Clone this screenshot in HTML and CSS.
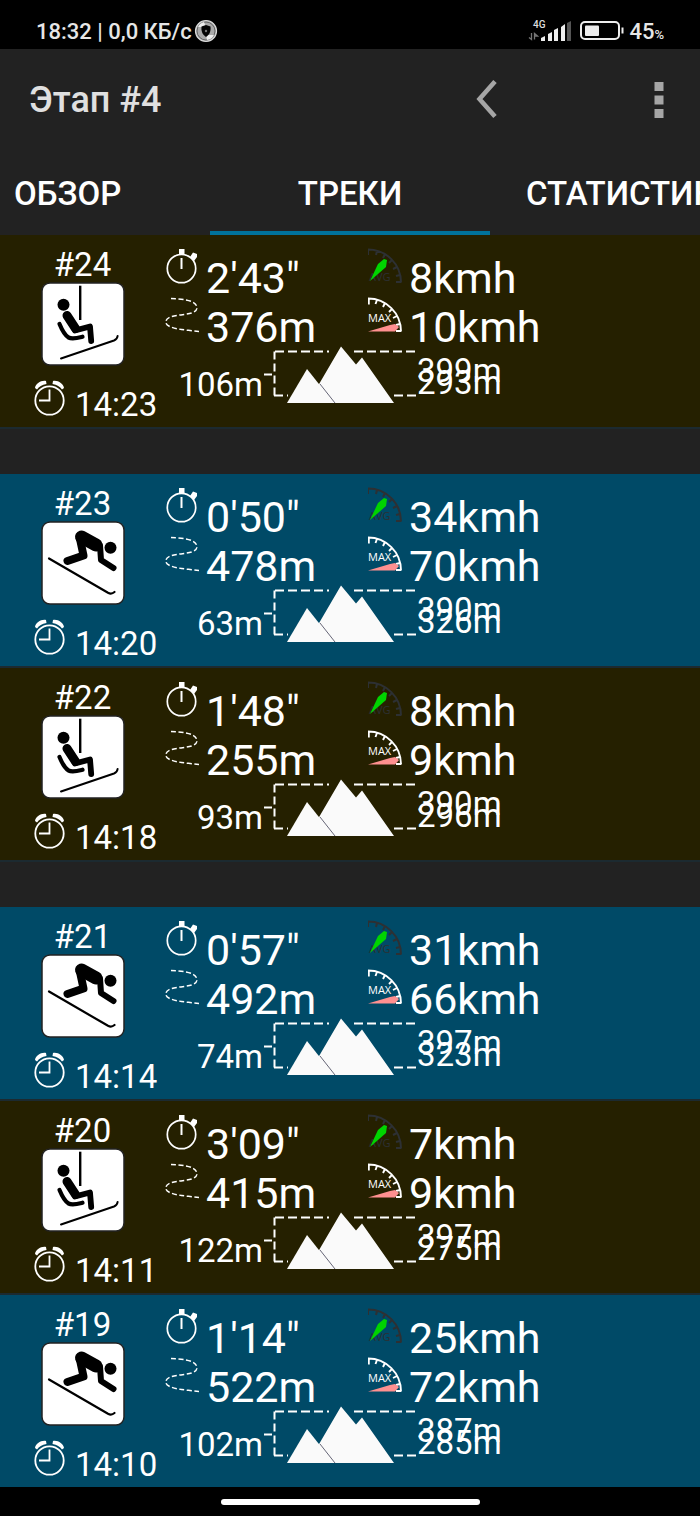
FILE: index.html
```html
<!DOCTYPE html>
<html lang="ru">
<head>
<meta charset="utf-8">
<meta name="viewport" content="width=device-width, initial-scale=1">
<title>Этап #4</title>
<link rel="stylesheet" href="styles.css">
</head>
<body>
<svg class="sprite" aria-hidden="true">
  <symbol id="lift" viewBox="0 0 84 84">
    <rect x="1" y="1" width="82" height="82" rx="8" fill="#fff" stroke="#222" stroke-width="1.5"/>
    <g fill="none" stroke="#000" stroke-linecap="round" stroke-linejoin="round">
      <path d="M39.200 3.700V38" stroke-width="2.400" stroke-linecap="butt"/>
      <path d="M26 33.500l8.500 13" stroke-width="9"/>
      <path d="M34 48.500l15-4 1.200 14.500" stroke-width="5.800"/>
      <path d="M18.500 42c2.500 6 5 11 9 13.500 4 2 9 .5 14-.8" stroke-width="4.200"/>
      <path d="M20 76.500l53-18c2.500-1 3.300-2 3.600-4.500" stroke-width="2"/>
    </g>
    <path d="M30 37l9 9-3 4-6-2z"/>
    <circle cx="22.500" cy="22.700" r="6"/>
  </symbol>
  <symbol id="skier" viewBox="0 0 84 84">
    <rect x="1" y="1" width="82" height="82" rx="8" fill="#fff" stroke="#222" stroke-width="1.500"/>
    <g fill="none" stroke="#000" stroke-linecap="round" stroke-linejoin="round">
      <path d="M40.500 16l14.500 8" stroke-width="13"/>
      <path d="M39 18l3.500 16.500L26.500 40" stroke-width="8"/>
      <path d="M59 24.500l1 14.500 12.500 8" stroke-width="6"/>
      <path d="M8 37.500l59 34.300c3 1.500 5 .5 6.500-.8" stroke-width="2.200"/>
    </g>
    <circle cx="69.500" cy="26.700" r="6"/>
  </symbol>
  <symbol id="alarm" viewBox="0 0 32 36">
    <g fill="none" stroke="currentColor">
      <circle cx="15.500" cy="20.500" r="14.200" stroke-width="1.800"/>
      <path d="M15.500 9.500v11H5" stroke-width="1.800"/>
    </g>
    <path d="M1 8C1.500 4 7 0 12 1l.5 3C8 5 5 6.500 3 9.500zM30 8C29.500 4 24 0 19 1l-.5 3c4.500 1 7.500 2.500 9.500 5.500z" fill="currentColor"/>
  </symbol>
  <symbol id="stopwatch" viewBox="0 0 34 36">
    <circle cx="16.500" cy="20.500" r="14.200" fill="none" stroke="currentColor" stroke-width="1.700"/>
    <path d="M16.500 10v11" stroke="currentColor" stroke-width="2"/>
    <path d="M14 1h5.500v6H14zM25 9l3-4.500 4 1.500v3l-3 4z" fill="currentColor"/>
  </symbol>
  <symbol id="distance" viewBox="0 0 34 36">
    <path d="M6 1.500c10 .5 25 1 26 9 0 6-10 6.500-17 7.500C8 19 1 20 .8 25c0 7 20 8 33.500 9.500" fill="none" stroke="currentColor" stroke-width="1.500" stroke-dasharray="5 2.500"/>
  </symbol>
  <symbol id="avg" viewBox="0 0 34 36">
    <path d="M0 1.500A33 33 0 0 1 33 34.500M0 2v5M9 3l-1 4M17 6l-2 4M24 12l-3 3M29 19l-4 2M33 34h-5M32 27l-4 1" fill="none" stroke="#2d3033" stroke-width="2"/>
    <text x="1" y="33" class="dial-text dial-text-dim">AVG</text>
    <path d="M2 33l8-17 6-5 3 1-1 7z" fill="#00d400"/>
  </symbol>
  <symbol id="max" viewBox="0 0 34 36">
    <path d="M0 1.500A33 33 0 0 1 33 34.500M.8 2v5.500M9 3L7.500 7M17 6l-2 4M24 12l-3 3M29 19l-4 2M33 34h-5M32 27l-4 1" fill="none" stroke="currentColor" stroke-width="1.900"/>
    <text x="0" y="25" class="dial-text">MAX</text>
    <path d="M0 34.500L22 28l5-1 4 3-4 4.500z" fill="#ff9090"/>
  </symbol>
  <symbol id="mountain" viewBox="0 0 154 58">
    <path d="M1 28.500h8M11.500 5.500v48" fill="none" stroke="currentColor" stroke-width="2" stroke-dasharray="8 4"/>
    <path d="M12 5.500h54M91 5.500h63" fill="none" stroke="currentColor" stroke-width="2" stroke-dasharray="9 4"/>
    <path d="M11 49.500h14M131 49.500h23" fill="none" stroke="currentColor" stroke-width="2" stroke-dasharray="9 4"/>
    <path d="M45 57l14-24L78 .5l15 18 6-7L131 57z" fill="#fafafa"/>
    <path d="M24 57l20-34 27 34z" fill="#fafafa"/>
    <path d="M57 38l15 19" stroke="#667" stroke-width="1"/>
  </symbol>
</svg>

<div class="screen">
  <div class="status-bar">
    <span>18:32 | 0,0 КБ/с</span>
    <svg class="disc" viewBox="0 0 24 24" aria-hidden="true">
      <circle cx="12" cy="12" r="10.500" fill="#aaa" stroke="#ddd" stroke-width="1.200"/>
      <circle cx="12" cy="12" r="9" fill="none" stroke="#666" stroke-width="1"/>
      <path d="M4 8a9 9 0 0 1 6-5l2 5zM20 16a9 9 0 0 1-7 5l-1-5z" fill="#eee"/>
      <path d="M7.500 7.500L12 6l4.500 1.500c.5 5-1 8-4.500 10.500C8.500 15.500 7 12.500 7.500 7.500z" fill="#050505"/>
      <circle cx="12" cy="12" r="1.200" fill="#777"/>
    </svg>
    <svg class="signal" viewBox="0 0 46 24" aria-label="4G">
      <text x="5" y="9" class="network">4G</text>
      <path d="M3.500 14v6.500l-2.500-2M6.500 20.500V14.500l3 2.500H6.500" fill="none" stroke="#777" stroke-width="1.300"/>
      <path d="M13 22v-3l4-2v5zM20 22v-7l4-2v9zM26 22V11l4-2v13zM33 22V8l4-3v17z" fill="#eee"/>
      <path d="M39 22V4l4-2v20z" fill="#555"/>
    </svg>
    <svg class="battery" viewBox="0 0 44 20" aria-hidden="true">
      <rect x="1" y="1" width="38" height="17" rx="4" fill="none" stroke="#eee" stroke-width="2"/>
      <rect x="5" y="4.500" width="14" height="10.500" rx="1" fill="#eee"/>
      <path d="M42.500 6.500v6" stroke="#eee" stroke-width="2"/>
    </svg>
    <span>45<small class="percent">%</small></span>
  </div>

  <header class="action-bar">
    <h1 class="title">Этап #4</h1>
    <button class="icon-button" type="button" aria-label="Назад">
      <svg width="22" height="40" viewBox="0 0 22 40"><path d="M19 1.500L3.500 19 19 36.500" fill="none" stroke="#a6a6a6" stroke-width="4.600"/></svg>
    </button>
    <button class="icon-button more" type="button" aria-label="Меню">
      <svg width="10" height="38" viewBox="0 0 10 38"><path d="M.5 1h9v9h-9zM.5 14.500h9v9h-9zM.5 28h9v9h-9z" fill="#a6a6a6"/></svg>
    </button>
  </header>

  <nav class="tabs">
    <button class="tab tab-first" type="button">ОБЗОР</button>
    <button class="tab tab-active" type="button" aria-current="page">ТРЕКИ</button>
    <button class="tab tab-last" type="button">СТАТИСТИКА</button>
  </nav>

  <ul class="tracks">
    <li class="track lift gap-after">
      <div class="summary">
        <span>#24</span>
        <svg class="kind"><use href="#lift"/></svg>
        <div class="start"><svg class="alarm"><use href="#alarm"/></svg><time>14:23</time></div>
      </div>
      <div class="details">
        <div class="metrics">
          <div class="metric"><svg class="icon"><use href="#stopwatch"/></svg><span>2'43"</span></div>
          <div class="metric"><svg class="icon"><use href="#avg"/></svg><span>8kmh</span></div>
          <div class="metric"><svg class="icon"><use href="#distance"/></svg><span>376m</span></div>
          <div class="metric"><svg class="icon"><use href="#max"/></svg><span>10kmh</span></div>
        </div>
        <div class="elevation">
          <span class="drop">106m</span><svg class="mountain"><use href="#mountain"/></svg>
          <div class="range"><span>399m</span><span>293m</span></div>
        </div>
      </div>
    </li>
    <li class="track run">
      <div class="summary">
        <span>#23</span>
        <svg class="kind"><use href="#skier"/></svg>
        <div class="start"><svg class="alarm"><use href="#alarm"/></svg><time>14:20</time></div>
      </div>
      <div class="details">
        <div class="metrics">
          <div class="metric"><svg class="icon"><use href="#stopwatch"/></svg><span>0'50"</span></div>
          <div class="metric"><svg class="icon"><use href="#avg"/></svg><span>34kmh</span></div>
          <div class="metric"><svg class="icon"><use href="#distance"/></svg><span>478m</span></div>
          <div class="metric"><svg class="icon"><use href="#max"/></svg><span>70kmh</span></div>
        </div>
        <div class="elevation">
          <span class="drop">63m</span><svg class="mountain"><use href="#mountain"/></svg>
          <div class="range"><span>390m</span><span>326m</span></div>
        </div>
      </div>
    </li>
    <li class="track lift gap-after">
      <div class="summary">
        <span>#22</span>
        <svg class="kind"><use href="#lift"/></svg>
        <div class="start"><svg class="alarm"><use href="#alarm"/></svg><time>14:18</time></div>
      </div>
      <div class="details">
        <div class="metrics">
          <div class="metric"><svg class="icon"><use href="#stopwatch"/></svg><span>1'48"</span></div>
          <div class="metric"><svg class="icon"><use href="#avg"/></svg><span>8kmh</span></div>
          <div class="metric"><svg class="icon"><use href="#distance"/></svg><span>255m</span></div>
          <div class="metric"><svg class="icon"><use href="#max"/></svg><span>9kmh</span></div>
        </div>
        <div class="elevation">
          <span class="drop">93m</span><svg class="mountain"><use href="#mountain"/></svg>
          <div class="range"><span>390m</span><span>296m</span></div>
        </div>
      </div>
    </li>
    <li class="track run">
      <div class="summary">
        <span>#21</span>
        <svg class="kind"><use href="#skier"/></svg>
        <div class="start"><svg class="alarm"><use href="#alarm"/></svg><time>14:14</time></div>
      </div>
      <div class="details">
        <div class="metrics">
          <div class="metric"><svg class="icon"><use href="#stopwatch"/></svg><span>0'57"</span></div>
          <div class="metric"><svg class="icon"><use href="#avg"/></svg><span>31kmh</span></div>
          <div class="metric"><svg class="icon"><use href="#distance"/></svg><span>492m</span></div>
          <div class="metric"><svg class="icon"><use href="#max"/></svg><span>66kmh</span></div>
        </div>
        <div class="elevation">
          <span class="drop">74m</span><svg class="mountain"><use href="#mountain"/></svg>
          <div class="range"><span>397m</span><span>323m</span></div>
        </div>
      </div>
    </li>
    <li class="track lift">
      <div class="summary">
        <span>#20</span>
        <svg class="kind"><use href="#lift"/></svg>
        <div class="start"><svg class="alarm"><use href="#alarm"/></svg><time>14:11</time></div>
      </div>
      <div class="details">
        <div class="metrics">
          <div class="metric"><svg class="icon"><use href="#stopwatch"/></svg><span>3'09"</span></div>
          <div class="metric"><svg class="icon"><use href="#avg"/></svg><span>7kmh</span></div>
          <div class="metric"><svg class="icon"><use href="#distance"/></svg><span>415m</span></div>
          <div class="metric"><svg class="icon"><use href="#max"/></svg><span>9kmh</span></div>
        </div>
        <div class="elevation">
          <span class="drop">122m</span><svg class="mountain"><use href="#mountain"/></svg>
          <div class="range"><span>397m</span><span>275m</span></div>
        </div>
      </div>
    </li>
    <li class="track run">
      <div class="summary">
        <span>#19</span>
        <svg class="kind"><use href="#skier"/></svg>
        <div class="start"><svg class="alarm"><use href="#alarm"/></svg><time>14:10</time></div>
      </div>
      <div class="details">
        <div class="metrics">
          <div class="metric"><svg class="icon"><use href="#stopwatch"/></svg><span>1'14"</span></div>
          <div class="metric"><svg class="icon"><use href="#avg"/></svg><span>25kmh</span></div>
          <div class="metric"><svg class="icon"><use href="#distance"/></svg><span>522m</span></div>
          <div class="metric"><svg class="icon"><use href="#max"/></svg><span>72kmh</span></div>
        </div>
        <div class="elevation">
          <span class="drop">102m</span><svg class="mountain"><use href="#mountain"/></svg>
          <div class="range"><span>387m</span><span>285m</span></div>
        </div>
      </div>
    </li>
  </ul>

  <div class="nav-bar"><div class="handle"></div></div>
</div>
</body>
</html>
```

FILE: styles.css
```css
* {
  box-sizing: border-box;
}

body {
  margin: 0;
  background: #222222;
  color: #ffffff;
  font-family: Roboto, "Noto Sans", sans-serif;
}

button {
  margin: 0;
  padding: 0;
  border: 0;
  background: none;
  color: inherit;
  font: inherit;
}

svg {
  display: block;
  flex: none;
}

.sprite {
  display: none;
}

.screen {
  display: flex;
  flex-direction: column;
  height: 100vh;
}

/* Status bar */

.status-bar {
  display: flex;
  flex: none;
  align-items: center;
  height: 49px;
  padding: 13px 36px 0;
  background: #000000;
  color: #e6e6e6;
  font-size: 22px;
  font-weight: 500;
}

.disc {
  width: 24px;
  height: 24px;
  margin-left: 2px;
}

.signal {
  width: 46px;
  height: 24px;
  margin-left: auto;
}

.battery {
  width: 44px;
  height: 20px;
  margin: 0 5px 0 6px;
}

.network {
  fill: #dddddd;
  font-size: 10px;
}

.percent {
  font-size: 13px;
}

/* Action bar */

.action-bar {
  display: flex;
  flex: none;
  align-items: center;
  height: 102px;
  padding: 0 36px 0 29px;
  color: #e0e0e0;
}

.title {
  flex: 1;
  margin: 0;
  font-size: 36px;
  font-weight: 500;
}

.icon-button {
  display: flex;
}

.more {
  margin-left: 156px;
}

/* Tabs */

.tabs {
  display: grid;
  flex: none;
  grid-template-columns: 3fr 4fr 3fr;
  height: 84px;
  overflow: hidden;
}

.tab {
  min-width: 0;
  border-bottom: 4px solid transparent;
  padding-top: 4px;
  font-size: 33px;
  font-weight: 500;
  white-space: nowrap;
}

.tab-first {
  padding-left: 14px;
  text-align: left;
}

.tab-active {
  border-bottom-color: #00729a;
}

.tab-last {
  padding-left: 36px;
  text-align: left;
}

/* Track list */

.tracks {
  flex: 1;
  min-height: 0;
  margin: 0;
  padding: 0;
  overflow-y: auto;
  list-style: none;
  scrollbar-width: none;
}

.track {
  display: flex;
  height: 194px;
  border-bottom: 2px solid #1c2a30;
}

.lift {
  background: #252000;
}

.run {
  background: #004a67;
}

.gap-after {
  margin-bottom: 45px;
}

.summary {
  display: flex;
  flex: none;
  flex-direction: column;
  align-items: center;
  width: 165px;
  padding-top: 12px;
  font-size: 33px;
  line-height: 35px;
}

.kind {
  width: 84px;
  height: 84px;
}

.start {
  display: flex;
  align-items: flex-start;
  align-self: stretch;
  gap: 9px;
  margin-top: 14px;
  padding-left: 34px;
  line-height: 49px;
}

.alarm {
  width: 32px;
  height: 36px;
}

.details {
  flex: 1;
  padding-top: 19px;
}

.metrics {
  display: grid;
  grid-template-columns: 203px 1fr;
  font-size: 43px;
  line-height: 49px;
}

.metric {
  display: flex;
  align-items: flex-start;
  gap: 7px;
}

.icon {
  width: 34px;
  height: 36px;
  margin-top: -6px;
}

.dial-text {
  fill: currentColor;
  font-family: "Open Sans", sans-serif;
  font-size: 11px;
}

.dial-text-dim {
  fill: #2d3033;
}

.elevation {
  display: flex;
  align-items: flex-end;
  margin-top: -6px;
  font-size: 33px;
}

.drop {
  width: 98px;
  line-height: 38px;
  text-align: right;
}

.mountain {
  width: 154px;
  height: 58px;
}

.range {
  display: flex;
  flex-direction: column;
  align-self: flex-start;
  padding-top: 19px;
  line-height: 12px;
}

/* Gesture bar */

.nav-bar {
  display: flex;
  flex: none;
  align-items: center;
  justify-content: center;
  height: 29px;
  background: #000000;
}

.handle {
  width: 37%;
  height: 6px;
  border-radius: 3px;
  background: #ffffff;
}
```
